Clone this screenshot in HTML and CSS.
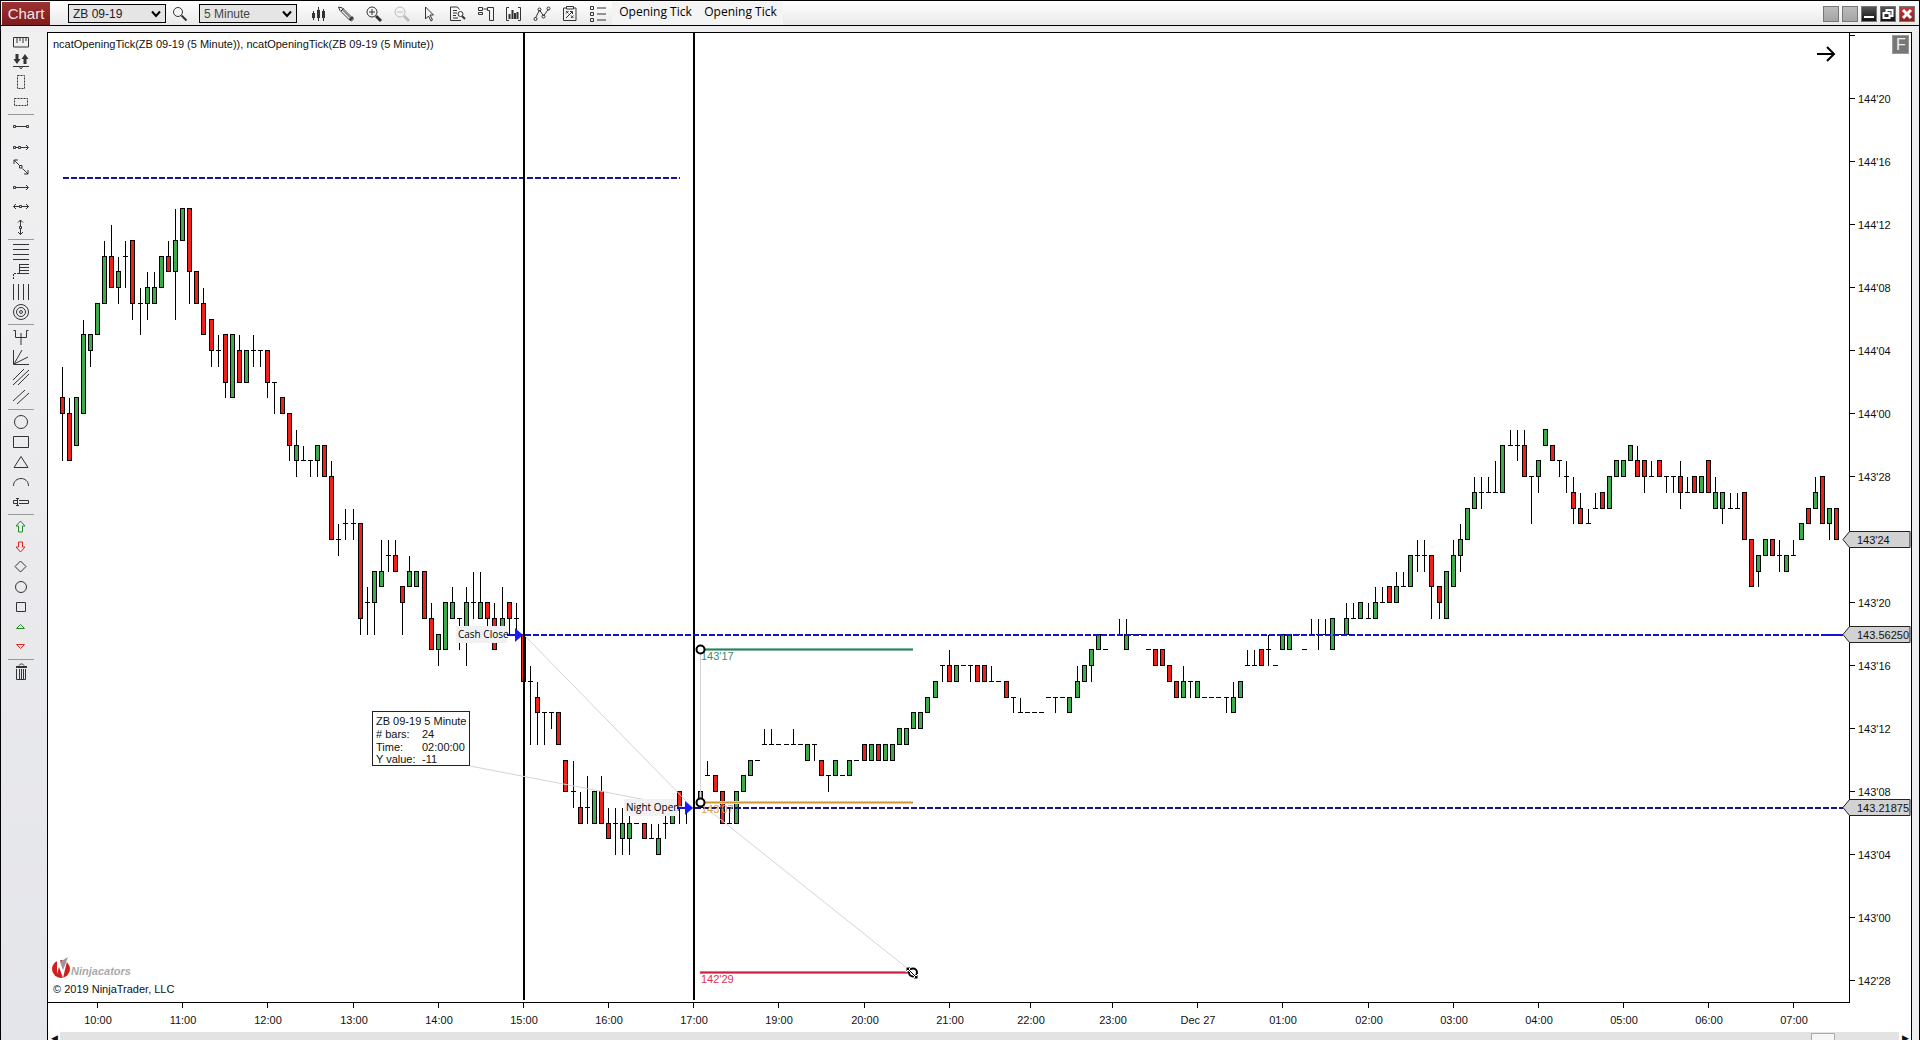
FILE: index.html
```html
<!DOCTYPE html>
<html lang="en">
<head>
<meta charset="utf-8">
<title>Chart - ZB 09-19</title>
<link rel="stylesheet" href="styles.css">
</head>
<body>
<header class="titlebar">
  <h1 class="tag">Chart</h1>
  <label class="picker"><select class="picker-box" aria-label="Instrument"><option>ZB 09-19</option></select><svg class="chevron" viewBox="0 0 10 8"><path d="M1 1.500l4 4.500 4-4.500"/></svg></label>
  <button class="tool search" aria-label="Search"><svg viewBox="0 0 18 18"><circle cx="7" cy="7" r="4.500"/><path d="M10.500 10.500l5 5" class="w2"/></svg></button>
  <label class="picker"><select class="picker-box soft" aria-label="Interval"><option>5 Minute</option></select><svg class="chevron" viewBox="0 0 10 8"><path d="M1 1.500l4 4.500 4-4.500"/></svg></label>
  <nav class="tools">
    <button class="tool" aria-label="Chart style"><svg viewBox="0 0 18 18"><path d="M4.500 6v9M9.500 2v14M14.500 4v12"/><path class="w3" d="M4.500 8v5M9.500 5v8M14.500 6v7"/></svg></button>
    <button class="tool" aria-label="Drawing tools"><svg viewBox="0 0 18 18"><path d="M1.500 2l4 1 9 9-2.500 2.500-9-9zM4 6l2.500-2.500M5.500 5l8 8M14.500 12l2 2-2 2-2.500-1.500"/><path class="w2" d="M13 15l3-3"/></svg></button>
    <button class="tool" aria-label="Zoom in"><svg viewBox="0 0 18 18"><circle cx="7" cy="7" r="5"/><path d="M7 4v6M4 7h6"/><path class="w3" d="M11 11l5 5"/></svg></button>
    <button class="tool pale" aria-label="Zoom out"><svg viewBox="0 0 18 18"><circle cx="7" cy="7" r="5"/><path d="M4 7h6"/><path class="w3" d="M11 11l5 5"/></svg></button>
    <button class="tool" aria-label="Pointer"><svg viewBox="0 0 18 18"><path d="M4.500 2v12l3-3 2.500 5 1.500-1-2.500-5h3.500z"/></svg></button>
    <button class="tool" aria-label="Data box"><svg viewBox="0 0 18 18"><path d="M10.500 4.500l-2-2.500h-7v13.500h10.500M4 5.500h4M4 8h4M4 10.500h3M4 13h5"/><circle cx="11.500" cy="9" r="2.500"/><path class="w2" d="M13 11l3 3"/></svg></button>
    <button class="tool" aria-label="Chart trader"><svg viewBox="0 0 18 18"><path d="M10.500 2.500h6v13h-4v-10h-2zM10.500 4h-4M1.500 2.500h4v3h-4zM1.500 7.500h4v2h-4z"/></svg></button>
    <button class="tool" aria-label="Bars"><svg viewBox="0 0 18 18"><path d="M4 2.500h-2.500v13h2.500M13 2.500h2.500v13h-2.500"/><path class="w2" d="M4.500 9v5M7.500 5v9M10 8v6M12.500 7v7"/></svg></button>
    <button class="tool" aria-label="Indicators"><svg viewBox="0 0 18 18"><path d="M2.500 13l4-8 4 6 5-7"/><circle cx="2.500" cy="14" r="1.500"/><circle cx="6.500" cy="4.500" r="1.500"/><circle cx="10.500" cy="11.500" r="1.500"/><circle cx="15.500" cy="3.500" r="1.500"/></svg></button>
    <button class="tool" aria-label="Strategies"><svg viewBox="0 0 18 18"><path d="M5 3h-2.500v12.500h12.500v-12.500h-2.500M5.500 1.500h7v2.500h-7zM5 6l2.500 2.500M7.500 6l-2.500 2.500M10 10.500l2.500 2.500M12.500 10.500l-2.500 2.500M5 13l6-6M9 6.500h2.500v2.500"/></svg></button>
    <button class="tool" aria-label="Properties"><svg viewBox="0 0 18 18"><path d="M1.500 1.500h3v3h-3zM1.500 7.500h3v3h-3zM1.500 13.500h3v3h-3zM8 3h9M8 9h9M8 15h9"/></svg></button>
  </nav>
  <div class="ticks"><button class="text-tool">Opening Tick</button><button class="text-tool">Opening Tick</button></div>
  <div class="window-buttons">
    <button class="wb blank" aria-label="Link instrument"></button>
    <button class="wb blank" aria-label="Link interval"></button>
    <button class="wb dark" aria-label="Minimize"><svg viewBox="0 0 14 14"><path d="M2 10h10"/></svg></button>
    <button class="wb dark" aria-label="Restore"><svg viewBox="0 0 14 14"><path d="M5.500 6v-3h6v6h-3M2.500 6h6v5h-6z"/></svg></button>
    <button class="wb close" aria-label="Close"><svg viewBox="0 0 14 14"><path d="M3 3l8 8M11 3l-8 8"/></svg></button>
  </div>
</header>
<main class="workspace">
  <aside class="sidebar">
    <button class="draw" aria-label="Ruler"><svg viewBox="0 0 18 18"><path d="M1.500 14v-9.500h15v9.500zM5 5v5M8 5v3M11 5v5M14 5v3"/></svg></button>
    <button class="draw" aria-label="Risk reward"><svg viewBox="0 0 18 18"><path d="M1 13.500h16M7.500 14l1.500 2 1.500-2"/><path class="w3" d="M5 1v6M13 11v-6"/><path class="fill" d="M1.500 6h7l-3.500 5zM9.500 6h7l-3.500-5z"/></svg></button>
    <button class="draw" aria-label="Region X"><svg viewBox="0 0 18 18"><path class="dash" d="M5.500 2.500h7v13h-7z"/></svg></button>
    <button class="draw" aria-label="Region Y"><svg viewBox="0 0 18 18"><path class="dash" d="M2.500 5.500h13v7h-13z"/></svg></button>
    <hr class="sep">
    <button class="draw" aria-label="Line"><svg viewBox="0 0 18 18"><path d="M1.500 7.500h2v2h-2zM14.500 7.500h2v2h-2zM4 8.500h10"/></svg></button>
    <button class="draw" aria-label="Ray"><svg viewBox="0 0 18 18"><path d="M1.500 8.500h2v2h-2zM6.500 8.500h2v2h-2zM4 9.500h2M9 9.500h7M14 7l2.500 2.500-2.500 2.500"/></svg></button>
    <button class="draw" aria-label="Extended line"><svg viewBox="0 0 18 18"><path d="M2 2l5.500 5.500M10.500 10.500l5.500 5.500M2 6v-4h4M16 12v4h-4M7.500 7.500h2.500v2.500h-2.500z"/></svg></button>
    <button class="draw" aria-label="Arrow line"><svg viewBox="0 0 18 18"><path d="M1.500 8.500h2v2h-2zM4 9.500h12M14 7l2.500 2.500-2.500 2.500"/></svg></button>
    <button class="draw" aria-label="Horizontal line"><svg viewBox="0 0 18 18"><path d="M7.500 7.500h2v2h-2zM1 8.500h6M10 8.500h7M4 6l-2.500 2.500 2.500 2.500M14 6l2.500 2.500-2.500 2.500"/></svg></button>
    <button class="draw" aria-label="Vertical line"><svg viewBox="0 0 18 18"><path d="M7.500 8.500h2v2h-2zM8.500 2v6M8.500 11v6M6 4.500l2.500-2.500 2.500 2.500M6 14l2.500 2.500 2.500-2.500"/></svg></button>
    <hr class="sep">
    <button class="draw" aria-label="Fibonacci retracement"><svg viewBox="0 0 18 18"><path d="M1 1.500h16M1 6.500h16M1 11.500h16M1 16.500h16"/></svg></button>
    <button class="draw" aria-label="Fibonacci extension"><svg viewBox="0 0 18 18"><path d="M7.500 1v10M7 1.500h10M7 4.500h10M7 7.500h10M7 10.500h10"/><path class="dash" d="M1.500 16v-5.500h6"/></svg></button>
    <button class="draw" aria-label="Fibonacci time"><svg viewBox="0 0 18 18"><path d="M1.500 1v16M6.500 1v16M11.500 1v16M16.500 1v16"/></svg></button>
    <button class="draw" aria-label="Fibonacci circle"><svg viewBox="0 0 18 18"><circle cx="9" cy="9" r="7.500"/><circle cx="9" cy="9" r="4.500"/><circle cx="9" cy="9" r="1.500"/></svg></button>
    <hr class="sep">
    <button class="draw" aria-label="Pitchfork"><svg viewBox="0 0 18 18"><path d="M1.500 2.500h2v7h11v-7h2M9 5v12"/></svg></button>
    <button class="draw" aria-label="Gann fan"><svg viewBox="0 0 18 18"><path d="M1.500 2v14.500h15.500M2 16l8-14M2 16l14-7"/></svg></button>
    <button class="draw" aria-label="Regression channel"><svg viewBox="0 0 18 18"><path d="M1 12l11-11M1 17l16-15M6 17l11-11"/></svg></button>
    <button class="draw" aria-label="Trend channel"><svg viewBox="0 0 18 18"><path d="M1 13l12-11M5 16l12-11"/></svg></button>
    <hr class="sep">
    <button class="draw" aria-label="Ellipse"><svg viewBox="0 0 18 18"><circle cx="9" cy="9" r="6.500"/></svg></button>
    <button class="draw" aria-label="Rectangle"><svg viewBox="0 0 18 18"><path d="M1.500 3.500h15v11h-15z"/></svg></button>
    <button class="draw" aria-label="Triangle"><svg viewBox="0 0 18 18"><path d="M9 3.500l7 11h-14z"/></svg></button>
    <button class="draw" aria-label="Arc"><svg viewBox="0 0 18 18"><path d="M1.500 13c0-10 15-10 15 0"/></svg></button>
    <button class="draw" aria-label="Text"><svg viewBox="0 0 18 18"><path d="M5 7.500h-3.500v3h3.500M7 7.500h9.500v3h-9.500M5.500 5v8M4 5.500h3M4 12.500h3"/></svg></button>
    <hr class="sep">
    <button class="draw green" aria-label="Arrow up"><svg viewBox="0 0 18 18"><path d="M8.500 3l4.500 5h-2.500v6h-4v-6h-2.500z"/></svg></button>
    <button class="draw red" aria-label="Arrow down"><svg viewBox="0 0 18 18"><path d="M8.500 14l4.500-5h-2.500v-5h-4v5h-2.500z"/></svg></button>
    <button class="draw" aria-label="Diamond"><svg viewBox="0 0 18 18"><path d="M8.500 3l5.500 5.500-5.500 5.500-5.500-5.500z"/></svg></button>
    <button class="draw" aria-label="Dot"><svg viewBox="0 0 18 18"><circle cx="9" cy="9" r="5.500"/></svg></button>
    <button class="draw" aria-label="Square"><svg viewBox="0 0 18 18"><path d="M4.500 4.500h9v9h-9z"/></svg></button>
    <button class="draw green" aria-label="Triangle up"><svg viewBox="0 0 18 18"><path d="M8.500 6.500l4 4h-8z"/></svg></button>
    <button class="draw red" aria-label="Triangle down"><svg viewBox="0 0 18 18"><path d="M8.500 10.500l4-4h-8z"/></svg></button>
    <hr class="sep">
    <button class="draw" aria-label="Remove all"><svg viewBox="0 0 18 18"><path d="M4.500 6v10.500h9v-10.500M7.500 6v10M9.500 6v10M11.500 6v10M7 2.500c1-2 4-2 5 0"/><path class="w2" d="M4 4h11"/></svg></button>
  </aside>
  <section class="panel">
    <svg class="chart" viewBox="48 33 1863 999" role="img" aria-label="ZB 09-19 five minute candles">
      <text class="lbl" x="53" y="48">ncatOpeningTick(ZB 09-19 (5 Minute)), ncatOpeningTick(ZB 09-19 (5 Minute))</text>
      <path class="level navy" d="M63 178H680"/>
      <g id="candles"></g>
      <path class="session" d="M524 33V1000M694 33V1000"/>
      <path class="link" d="M470 766L693 809M525 636L693 808M700 803L912 972M700.500 649V802"/>
      <path class="level blue" d="M525 635H1826"/>
      <path class="level navy" d="M695 808H1843"/>
      <path class="level-end" d="M1826 635H1843"/>
      <g class="marker"><rect x="456" y="626" width="51" height="17"/><path class="stem" d="M507 635H516"/><path class="head" d="M515 628l8 7-8 7z"/><text class="mark" x="458" y="638">Cash Close</text></g>
      <g class="marker"><rect x="624" y="799" width="53" height="17"/><path class="stem" d="M677 808H686"/><path class="head" d="M685 801l8 7-8 7z"/><text class="mark" x="626" y="811">Night Open</text></g>
      <g class="fib teal"><path d="M700 649.500H913"/><path class="core" d="M700 649.500H913"/><text class="lbl" x="701" y="660">143'17</text></g>
      <g class="fib gold"><path d="M700 802.500H913"/><path class="core" d="M700 802.500H913"/><text class="lbl" x="701" y="813">143'07</text></g>
      <g class="fib crimson"><path d="M700 972.500H913"/><path class="core" d="M700 972.500H913"/><text class="lbl" x="701" y="983">142'29</text></g>
      <g class="anchor"><circle cx="700.500" cy="649.500" r="4"/><circle cx="700.500" cy="802.500" r="4"/><circle cx="913" cy="972.500" r="4"/></g>
      <path class="cursor" d="M906 967h5l-2 2 7 7 2-2v5h-5l2-2-7-7-2 2z"/>
      <g class="info"><rect x="372.500" y="711.500" width="97" height="54"/>
        <text class="lbl" x="376" y="725">ZB 09-19 5 Minute</text>
        <text class="lbl" x="376" y="738"># bars:</text><text class="lbl" x="422" y="738">24</text>
        <text class="lbl" x="376" y="751">Time:</text><text class="lbl" x="422" y="751">02:00:00</text>
        <text class="lbl" x="376" y="763">Y value:</text><text class="lbl" x="422" y="763">-11</text></g>
      <g class="brand"><ellipse cx="61" cy="969" rx="9" ry="9"/><path class="slash" d="M57 960l3 0 3 9 5-12-5 21-4-11-2 7z"/><path class="shade" d="M60 962l8-5-5 13z"/><text x="71" y="975">Ninjacators</text></g>
      <text class="lbl" x="53" y="993">© 2019 NinjaTrader, LLC</text>
      <path class="go" d="M1817 54H1834M1827 47l7 7-7 7"/>
      <g id="axes"></g>
      <g class="fixed"><rect x="1892.500" y="35.500" width="16" height="18"/><text x="1896" y="50">F</text></g>
    </svg>
    <div class="scroll"><span class="arrow">◀</span><span class="thumb"></span><span class="arrow">▶</span></div>
  </section>
</main>
<script src="chart.js"></script>
</body>
</html>
```
FILE: styles.css
```css
* { box-sizing: border-box; }
body {
  margin: 0;
  height: 100vh;
  overflow: hidden;
  display: flex;
  flex-direction: column;
  background: #eeeef0;
  border: solid #000;
  border-width: 1px 1px 0 1px;
  font: 12px "Liberation Sans", Arial, sans-serif;
  color: #111;
}
button { padding: 0; border: 0; background: none; font: inherit; color: inherit; }
svg { fill: none; stroke: #333; }

.titlebar {
  flex: none;
  display: flex;
  align-items: center;
  height: 25px;
  padding: 1px 4px 0 1px;
  border-bottom: 1px solid #000;
  background: linear-gradient(#fff, #e9e9ea);
}
.tag {
  width: 48px;
  height: 23px;
  margin: 0 18px 0 0;
  font-size: 15px;
  line-height: 23px;
  font-weight: 400;
  text-align: center;
  color: #f4e6e6;
  background: linear-gradient(#9c3236, #801a1d);
}
.picker { display: grid; width: 98px; }
.picker-box {
  grid-area: 1 / 1;
  appearance: none;
  height: 19px;
  padding: 0 4px;
  border: 1px solid #000;
  border-radius: 0;
  background: #e6e5e6;
  font: inherit;
  color: #222;
}
.soft { color: #444; }
.chevron {
  grid-area: 1 / 1;
  justify-self: end;
  align-self: center;
  width: 10px;
  height: 8px;
  margin-right: 5px;
  stroke: #000;
  stroke-width: 2;
  pointer-events: none;
}
.tool { display: grid; place-items: center; width: 28px; height: 22px; }
.tool svg, .draw svg { width: 18px; height: 18px; }
.search { margin-right: 5px; }
.tools { display: flex; margin-left: 7px; }
.pale svg { stroke: #bbb; }
.w2 { stroke-width: 2; }
.w3 { stroke-width: 3; }
.fill { fill: #333; stroke: none; }
.dash { stroke-dasharray: 2 1; }
.ticks { display: flex; align-self: stretch; padding-left: 1px; background: #f4f4f4; }
.text-tool {
  width: 85px;
  height: 20px;
  font: 12px/20px "Open Sans", sans-serif;
  color: #000;
}
.window-buttons { display: flex; gap: 3px; margin-left: auto; }
.wb {
  display: grid;
  place-items: center;
  width: 16px;
  height: 16px;
  border: 1px solid #777;
}
.wb svg { width: 14px; height: 14px; stroke: #fff; stroke-width: 2; }
.blank { background: linear-gradient(#bbb, #a4a4a4); }
.dark { background: linear-gradient(#555, #111); }
.close { background: linear-gradient(#c33c3c, #8e2020); }
.close svg { stroke-width: 3; }

.workspace { flex: 1; display: flex; padding: 6px 7px 0 0; min-height: 0; }
.sidebar {
  flex: none;
  display: flex;
  flex-direction: column;
  align-items: center;
  width: 46px;
  padding-right: 6px;
  background: linear-gradient(#f1f0f1, #e4e5ea);
}
.draw { flex: none; display: grid; place-items: center; width: 26px; height: 20px; }
.green svg { stroke: #228b22; }
.red svg { stroke: #e02a20; }
.sep { flex: none; width: 26px; height: 1px; margin: 2px 0; border: 0; background: #999; }

.panel { flex: 1; min-width: 0; background: #fff; border: 1px solid #000; border-bottom: 0; }
.chart { display: block; width: 100%; height: auto; }
.chart text { stroke: none; fill: #111; font-size: 11px; }
.bull { fill: #3cab49; stroke: #000; }
.bear { fill: #ee2019; stroke: #000; }
.wick, .axis { stroke: #000; shape-rendering: crispEdges; }
.session { stroke: #000; stroke-width: 2; }
.link { stroke: #d4d4d4; }
.level { stroke-width: 2; stroke-dasharray: 6 2; }
.navy { stroke: #14148c; }
.blue { stroke: #1414c4; }
.level-end, .stem { stroke: #1414d8; stroke-width: 2; }
.marker rect { fill: #f1f1f3; stroke: none; }
.head { fill: #1a1aff; stroke: none; }
.chart .mark { font: 10px "Open Sans", sans-serif; fill: #000; }
.fib path { stroke-width: 3; }
.fib .core { stroke-width: 1; }
.teal path { stroke: #7fb79f; }
.teal .core { stroke: #2e8057; }
.chart .teal text { fill: #3c8b6c; }
.gold path { stroke: #f0c878; }
.gold .core { stroke: #d09830; }
.chart .gold text { fill: #dca048; }
.crimson path { stroke: #ee7080; }
.crimson .core { stroke: #d02040; }
.chart .crimson text { fill: #d83450; }
.anchor { fill: #fff; stroke: #000; stroke-width: 2; }
.cursor { fill: #000; stroke: #fff; }
.info rect { fill: #fff; stroke: #222; }
.brand ellipse { fill: #cf2020; stroke: none; }
.slash { fill: #fff; stroke: none; }
.shade { fill: #999; stroke: none; }
.chart .brand text { font: italic bold 11px "Liberation Sans", sans-serif; fill: #aaa; }
.go { stroke: #000; stroke-width: 2; }
.price-tag { fill: #d2d2d2; stroke: #222; }
.mid { text-anchor: middle; }
.fixed rect { fill: #777; stroke: #999; }
.chart .fixed text { font-size: 16px; fill: #eee; }

.scroll { display: flex; justify-content: space-between; height: 16px; background: #e3e3e3; }
.arrow { width: 12px; background: #fff; font-size: 9px; line-height: 12px; text-align: center; }
.thumb { width: 24px; margin: 1px 64px 0 auto; border: 1px solid #aaa; background: #f6f6f6; }
```
FILE: chart.js
```js
// Candles in order, one per 5-minute slot: colour (R, G, or D for open = close),
// then high, body top, body bottom, low in 32nds relative to 144'00.
const DATA = `
R3,1,0,-3 R1,0,-3,-3 G1,1,-2,-2 G6,5,0,0 G5,5,4,3 G7,7,5,5 G11,10,7,7 R12,10,8,8 G10,9,8,7 D11,10,10,8
R11,11,7,6 D8,7,7,5 G9,8,7,6 G9,8,7,7 G10,10,8,8 R11,10,9,9 G13,11,9,6 G13,13,11,11 R13,13,9,7 R9,9,7,7
R8,7,5,5 R6,6,4,3 D5,4,4,3 R5,5,2,1 G5,5,1,1 R5,4,2,2 G4,4,2,2 D5,4,4,3 D4,4,4,3 R4,4,2,1
D2,2,2,0 R1,1,0,0 R0,0,-2,-3 G-1,-2,-3,-4 D-2,-3,-3,-3 D-3,-3,-3,-4 G-2,-2,-3,-4 R-2,-2,-4,-4 R-3,-4,-8,-8 D-7,-8,-8,-9
D-6,-7,-7,-8 D-6,-7,-7,-8 R-7,-7,-13,-14 D-11,-12,-12,-14 G-10,-10,-12,-14 G-8,-10,-11,-11 D-8,-9,-9,-10 R-8,-9,-10,-10 R-11,-11,-12,-14 G-9,-10,-11,-11
G-10,-10,-11,-11 R-10,-10,-13,-13 R-12,-13,-15,-15 G-14,-14,-15,-16 G-12,-12,-15,-15 G-11,-12,-13,-13 D-13,-13,-13,-15 G-11,-12,-14,-16 D-10,-12,-12,-13 G-10,-12,-13,-13
R-12,-12,-13,-14 R-12,-13,-15,-15 G-11,-13,-14,-14 R-12,-12,-13,-14 D-12,-13,-13,-14 R-14,-14,-17,-17 D-16,-17,-17,-21 R-17,-18,-19,-21 D-19,-19,-19,-21 D-19,-19,-19,-20
R-19,-19,-21,-21 R-22,-22,-24,-24 D-22,-24,-24,-25 R-24,-25,-26,-26 D-23,-25,-25,-26 G-24,-24,-26,-26 R-23,-24,-26,-26 R-25,-26,-27,-27 D-25,-26,-26,-28 G-25,-26,-27,-28
G-25,-26,-27,-28 D-26,-26,-26,-26 R-26,-26,-27,-27 D-26,-27,-27,-27 G-26,-27,-28,-28 D-25,-26,-26,-27 G-25,-25,-26,-26 R-24,-24,-25,-26 D-25,-25,-25,-26 D-25,-25,-25,-25
G-23,-24,-25,-25 D-22,-23,-23,-23 R-23,-23,-24,-24 R-24,-24,-26,-26 D-25,-26,-26,-26 G-24,-24,-26,-26 G-23,-23,-24,-24 G-22,-22,-23,-23 D-22,-22,-22,-22 D-20,-21,-21,-21
D-20,-21,-21,-21 D-21,-21,-21,-21 D-21,-21,-21,-21 D-20,-21,-21,-21 D-21,-21,-21,-21 G-21,-21,-22,-22 D-21,-21,-21,-22 R-22,-22,-23,-23 D-23,-23,-23,-24 G-22,-22,-23,-23
D-23,-23,-23,-23 G-22,-22,-23,-23 D-22,-22,-22,-22 R-21,-21,-22,-22 G-21,-21,-22,-22 R-21,-21,-22,-22 G-21,-21,-22,-22 G-21,-21,-22,-22 G-20,-20,-21,-21 G-20,-20,-21,-21
G-19,-19,-20,-20 G-19,-19,-20,-20 G-18,-18,-19,-19 G-17,-17,-18,-18 D-16,-16,-16,-17 R-15,-16,-17,-17 G-16,-16,-17,-17 D-16,-16,-16,-16 D-16,-16,-16,-17 R-16,-16,-17,-17
R-16,-16,-17,-17 D-16,-17,-17,-17 D-17,-17,-17,-17 R-17,-17,-18,-18 D-18,-18,-18,-19 D-18,-19,-19,-19 D-19,-19,-19,-19 D-19,-19,-19,-19 D-19,-19,-19,-19 D-18,-18,-18,-18
D-18,-18,-18,-19 D-18,-18,-18,-18 G-18,-18,-19,-19 G-16,-17,-18,-18 G-16,-16,-17,-17 G-15,-15,-16,-17 G-14,-14,-15,-15 D-15,-15,-15,-15 D-14,-14,-14,-14 D-13,-14,-14,-14
G-13,-14,-15,-15 D-14,-14,-14,-14 D-14,-14,-14,-14 D-15,-15,-15,-15 R-15,-15,-16,-16 R-15,-15,-16,-16 R-16,-16,-17,-17 R-17,-17,-18,-18 G-16,-17,-18,-18 D-17,-17,-17,-18
G-17,-17,-18,-18 D-18,-18,-18,-18 D-18,-18,-18,-18 D-18,-18,-18,-18 D-18,-18,-18,-19 G-17,-18,-19,-19 G-17,-17,-18,-18 D-15,-16,-16,-16 D-15,-16,-16,-16 R-15,-15,-16,-16
D-14,-15,-15,-16 D-16,-16,-16,-16 G-14,-14,-15,-15 G-14,-14,-15,-15 D-14,-14,-14,-14 D-15,-15,-15,-15 D-13,-14,-14,-14 D-13,-14,-14,-15 D-13,-14,-14,-14 G-13,-13,-15,-15
D-14,-14,-14,-14 G-12,-13,-14,-14 D-12,-13,-13,-13 G-12,-12,-13,-13 D-12,-13,-13,-13 G-11,-12,-13,-13 D-11,-12,-12,-12 R-11,-11,-12,-12 G-10,-11,-12,-12 D-10,-11,-11,-11
G-9,-9,-11,-11 D-8,-9,-9,-10 D-8,-9,-9,-10 R-9,-9,-11,-13 R-11,-11,-12,-13 G-10,-10,-13,-13 G-8,-9,-11,-11 G-7,-8,-9,-10 G-6,-6,-8,-8 G-4,-5,-6,-6
D-4,-5,-5,-6 D-4,-5,-5,-5 D-3,-5,-5,-5 G-2,-2,-5,-5 D-1,-2,-2,-2 D-1,-2,-2,-3 R-1,-2,-4,-4 D-4,-4,-4,-7 G-3,-3,-4,-5 G-1,-1,-2,-2
R-2,-2,-3,-3 D-3,-3,-3,-4 D-3,-4,-4,-5 R-4,-5,-6,-7 R-5,-6,-7,-7 D-6,-7,-7,-7 D-5,-6,-6,-6 R-5,-5,-6,-6 G-4,-4,-6,-6 G-3,-3,-4,-4
G-3,-3,-4,-4 G-2,-2,-3,-3 R-2,-3,-4,-4 R-3,-3,-4,-5 D-3,-4,-4,-4 R-3,-3,-4,-4 D-4,-4,-4,-5 D-4,-4,-4,-5 R-3,-4,-5,-6 D-4,-5,-5,-5
R-4,-4,-5,-5 G-4,-4,-5,-5 R-3,-3,-5,-5 G-4,-5,-6,-6 G-5,-5,-6,-7 D-5,-6,-6,-6 D-5,-6,-6,-6 R-5,-5,-8,-8 R-8,-8,-11,-11 G-9,-9,-10,-11
G-8,-8,-9,-9 R-8,-8,-9,-9 D-8,-9,-9,-10 G-9,-9,-10,-10 D-8,-9,-9,-9 G-7,-7,-8,-8 R-6,-6,-7,-7 G-4,-5,-6,-6 R-4,-4,-7,-7 G-6,-6,-7,-8 R-6,-6,-8,-8`;

const NS = 'http://www.w3.org/2000/svg';
const slotX = i => Math.floor(97.5 + 7.098 * i) + 0.5;
const priceY = t => Math.floor(413.5 - 15.75 * t) + 0.5;

function add(parent, tag, attrs, text) {
  const el = document.createElementNS(NS, tag);
  for (const k in attrs) el.setAttribute(k, attrs[k]);
  if (text) el.textContent = text;
  parent.appendChild(el);
}

const candles = document.getElementById('candles');
DATA.trim().split(/\s+/).forEach((item, n) => {
  const [hi, top, bot, lo] = item.slice(1).split(',').map(Number);
  const x = slotX(n - 5);
  if (hi !== lo) add(candles, 'path', { class: 'wick', d: `M${x} ${priceY(hi)}V${priceY(lo)}` });
  if (item[0] === 'D') {
    add(candles, 'path', { class: 'wick', d: `M${x - 2.5} ${priceY(top)}h5` });
  } else {
    add(candles, 'rect', {
      class: item[0] === 'G' ? 'bull' : 'bear',
      x: x - 2, y: priceY(top), width: 4, height: priceY(bot) - priceY(top)
    });
  }
});

const axes = document.getElementById('axes');
add(axes, 'path', { class: 'axis', d: 'M1849.5 33V1002.5M48 1002.5H1850' });

const TIMES = [[0, '10:00'], [12, '11:00'], [24, '12:00'], [36, '13:00'], [48, '14:00'], [60, '15:00'],
  [72, '16:00'], [84, '17:00'], [96, '19:00'], [108, '20:00'], [120, '21:00'], [131.5, '22:00'],
  [143, '23:00'], [155, 'Dec 27'], [167, '01:00'], [179, '02:00'], [191, '03:00'], [203, '04:00'],
  [215, '05:00'], [227, '06:00'], [239, '07:00']];
for (const [i, label] of TIMES) {
  add(axes, 'path', { class: 'axis', d: `M${slotX(i)} 1003v5` });
  add(axes, 'text', { class: 'lbl mid', x: slotX(i) + 0.5, y: 1024 }, label);
}

for (let t = 24; t >= -36; t -= 4) {
  add(axes, 'path', { class: 'axis', d: `M1850 ${priceY(t)}h5` });
  if (t === 24) continue;
  const whole = 144 + Math.floor(t / 32);
  const part = String(((t % 32) + 32) % 32).padStart(2, '0');
  add(axes, 'text', { class: 'lbl', x: 1858, y: priceY(t) + 4.5 }, `${whole}'${part}`);
}

for (const [y, label] of [[539.5, "143'24"], [634.5, '143.56250'], [807.5, '143.21875']]) {
  add(axes, 'path', { class: 'price-tag', d: `M1843 ${y}l6.5-8h60.500v16h-60.500z` });
  add(axes, 'text', { class: 'lbl', x: 1857, y: y + 4.5 }, label);
}
```
